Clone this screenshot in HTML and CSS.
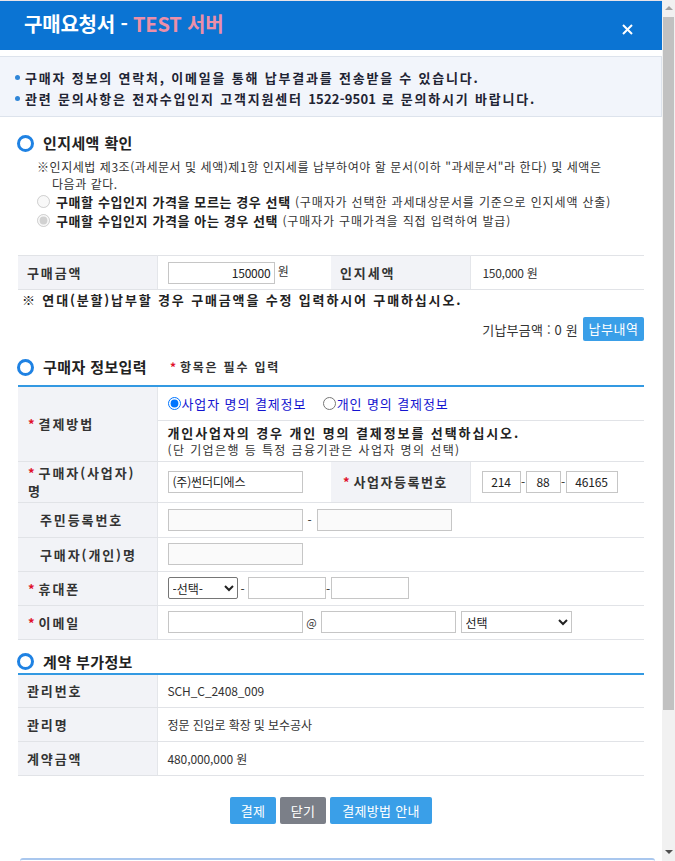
FILE: index.html
```html
<!DOCTYPE html>
<html lang="ko">
<head>
<meta charset="utf-8">
<title>구매요청서</title>
<link rel="stylesheet" href="styles.css">
</head>
<body>
<div class="window">
  <div class="main">
    <header class="titlebar">
      <h1 class="title">구매요청서 - <span class="test">TEST 서버</span></h1>
      <svg class="close" width="11" height="11" viewBox="0 0 11 11"><path d="M1 1L10 10M10 1L1 10" stroke="#fff" stroke-width="2"/></svg>
    </header>

    <div class="notice">
      <ul>
        <li>구매자 정보의 연락처, 이메일을 통해 납부결과를 전송받을 수 있습니다.</li>
        <li>관련 문의사항은 전자수입인지 고객지원센터 <span class="num">1522-9501</span> 로 문의하시기 바랍니다.</li>
      </ul>
    </div>

    <div class="content">
      <h2 class="sec-title first">인지세액 확인</h2>
      <p class="law">※인지세법 제3조(과세문서 및 세액)제1항 인지세를 납부하여야 할 문서(이하 "과세문서"라 한다) 및 세액은<br><span class="indent">다음과 같다.</span></p>
      <label class="opt"><input type="radio" name="t" disabled><b>구매할 수입인지 가격을 모르는 경우 선택</b> (구매자가 선택한 과세대상문서를 기준으로 인지세액 산출)</label>
      <label class="opt"><input type="radio" name="t" disabled checked><b>구매할 수입인지 가격을 아는 경우 선택</b> (구매자가 구매가격을 직접 입력하여 발급)</label>

      <table class="grid amount">
        <colgroup><col class="c139"><col class="c174"><col class="c139"><col class="c174"></colgroup>
        <tr>
          <th>구매금액</th>
          <td><input class="inp w107 right" type="text" value="150000"> 원</td>
          <th>인지세액</th>
          <td class="val">150,000 원</td>
        </tr>
      </table>
      <p class="warn">※ 연대(분할)납부할 경우 구매금액을 수정 입력하시어 구매하십시오.</p>
      <div class="paid"><span>기납부금액 : 0 원</span><button class="btn small">납부내역</button></div>

      <h2 class="sec-title">구매자 정보입력 <span class="req"><i>*</i>항목은 필수 입력</span></h2>
      <table class="grid form">
        <colgroup><col class="c139"><col class="c174"><col class="c139"><col class="c174"></colgroup>
        <tr class="r34">
          <th rowspan="2"><i>*</i>결제방법</th>
          <td colspan="3" class="radios">
            <label class="blue"><input type="radio" name="p" checked>사업자 명의 결제정보</label>
            <label class="blue"><input type="radio" name="p">개인 명의 결제정보</label>
          </td>
        </tr>
        <tr class="r41">
          <td colspan="3" class="guide"><b>개인사업자의 경우 개인 명의 결제정보를 선택하십시오.</b><br>(단 기업은행 등 특정 금융기관은 사업자 명의 선택)</td>
        </tr>
        <tr class="r41">
          <th class="wrap"><i>*</i>구매자(사업자)<br>명</th>
          <td><input class="inp w135" type="text" value="(주)썬더디에스"></td>
          <th class="mid"><i>*</i>사업자등록번호</th>
          <td class="biz"><input class="inp w39 c" type="text" value="214"><span class="dash">-</span><input class="inp w35 c" type="text" value="88"><span class="dash">-</span><input class="inp w52 c" type="text" value="46165"></td>
        </tr>
        <tr class="r35">
          <th class="noreq">주민등록번호</th>
          <td colspan="3"><input class="inp w135 off" type="text"><span class="dash wide">-</span><input class="inp w135 off" type="text"></td>
        </tr>
        <tr class="r34">
          <th class="noreq">구매자(개인)명</th>
          <td colspan="3"><input class="inp w135 off" type="text"></td>
        </tr>
        <tr class="r34">
          <th><i>*</i>휴대폰</th>
          <td colspan="3" class="phone"><select class="sel s70"><option>-선택-</option></select><span class="dash d10">-</span><input class="inp w78" type="text"><span class="dash">-</span><input class="inp w78" type="text"></td>
        </tr>
        <tr class="r34">
          <th><i>*</i>이메일</th>
          <td colspan="3"><input class="inp w135" type="text"><span class="at">@</span><input class="inp w135" type="text"><select class="sel s111"><option>선택</option></select></td>
        </tr>
      </table>

      <h2 class="sec-title third">계약 부가정보</h2>
      <table class="grid info">
        <colgroup><col class="c139"><col class="c487"></colgroup>
        <tr class="r34"><th>관리번호</th><td>SCH_C_2408_009</td></tr>
        <tr class="r34"><th>관리명</th><td>정문 진입로 확장 및 보수공사</td></tr>
        <tr class="r34"><th>계약금액</th><td>480,000,000 원</td></tr>
      </table>

      <div class="actions">
        <button class="btn b46">결제</button>
        <button class="btn gray b46">닫기</button>
        <button class="btn b102">결제방법 안내</button>
      </div>
    </div>
    <div class="next-panel"></div>
  </div>
  <div class="scrollbar">
    <span class="arr up"></span>
    <span class="thumb"></span>
    <span class="track"></span>
    <span class="arr down"></span>
  </div>
</div>
</body>
</html>
```

FILE: styles.css
```css
* { box-sizing: border-box; }
html, body { margin: 0; padding: 0; background: #fff; }
body {
  font-family: "Noto Sans CJK KR", "Noto Sans", "Liberation Sans", sans-serif;
  color: #333;
  font-size: 12px;
}
.window {
  display: flex;
  width: 675px;
  height: 861px;
  overflow: hidden;
}
.main {
  width: 662px;
  flex: none;
  display: flex;
  flex-direction: column;
}

/* title bar */
.titlebar {
  height: 50px;
  flex: none;
  background: #0b74d3;
  border-top: 1px solid #e9e3e8;
  display: flex;
  align-items: center;
  justify-content: space-between;
  padding: 0 29px 0 24px;
}
.title {
  margin: 0;
  font-size: 20px;
  font-weight: bold;
  color: #fff;
  line-height: 24px;
  margin-top: -4px;
  letter-spacing: -0.2px;
}
.title .test { color: #ec8fa8; }
.close { margin-top: 8px; }

/* notice */
.notice {
  margin-top: 6px;
  background: #f2f5fb;
  border-top: 1px solid #dde3ec;
  border-bottom: 1px solid #dde3ec;
  border-right: 1px solid #dde3ec;
  padding: 10px 0 7px 15px;
}
.notice ul { margin: 0; padding: 0; list-style: none; }
.notice li {
  line-height: 21px;
  font-size: 13px;
  font-weight: bold;
  color: #1f2433;
  letter-spacing: 1.8px;
  display: flex;
  align-items: center;
  white-space: pre;
}
.notice li .num { letter-spacing: 0.2px; }
.notice li::before {
  content: "";
  width: 5px;
  height: 5px;
  border-radius: 50%;
  background: #2f86d8;
  margin-right: 5px;
  flex: none;
}

.content { padding: 0 18px; }

/* section title */
.sec-title {
  margin: 16px 0 0 -1px;
  font-size: 15px;
  line-height: 20px;
  font-weight: bold;
  color: #222;
  display: flex;
  align-items: center;
  letter-spacing: 0.4px;
}
.sec-title::before {
  content: "";
  width: 11px;
  height: 11px;
  border-radius: 50%;
  border: 3px solid #1f82e3;
  margin-right: 9px;
  flex: none;
}
.sec-title .req {
  font-size: 12px;
  font-weight: bold;
  margin-left: 23px;
  color: #333;
  letter-spacing: 1.8px;
}
.req i {
  font-style: normal;
  color: #e0102a;
  margin-right: 2px;
}
th i {
  font-style: normal;
  color: #e0102a;
  margin-right: 4px;
  letter-spacing: 0;
}

.law {
  margin: 5px 0 0 19px;
  font-size: 12px;
  line-height: 17px;
  color: #333;
  letter-spacing: 0.55px;
}
.law .indent { padding-left: 15px; }

.opt {
  display: flex;
  align-items: center;
  margin-left: 19px;
  font-size: 12px;
  line-height: 19px;
  color: #333;
  letter-spacing: 0.85px;
  white-space: pre;
}
.opt input {
  margin: 0 6px 0 0;
  width: 13px;
  height: 13px;
}
.opt b { font-size: 13px; letter-spacing: 0.6px; color: #222; }

/* grid tables */
.grid {
  width: 626px;
  border-collapse: collapse;
  table-layout: fixed;
}
col.c139 { width: 139px; }
col.c174 { width: 174px; }
col.c487 { width: 487px; }
.grid th, .grid td {
  border-bottom: 1px solid #e1e3e7;
  padding: 0;
  vertical-align: middle;
  text-align: left;
}
.grid th {
  background: #f2f3f7;
  font-size: 13px;
  font-weight: bold;
  color: #333;
  letter-spacing: 1.9px;
  border-right: 1px solid #e4e6ea;
}
.grid td { background: #fff; padding-left: 10px; }
.grid tr.r34 > * { height: 34px; }
.grid tr.r35 > * { height: 35px; }
.grid tr.r41 > * { height: 41px; }

.amount { margin-top: 25px; border-top: 1px solid #e1e3e7; }
.amount th { padding-left: 9px; height: 34px; }
.amount td { font-size: 12px; }
.amount td.val { padding-left: 12px; letter-spacing: -0.3px; }

.warn {
  margin: 0;
  font-size: 13px;
  font-weight: bold;
  line-height: 20px;
  color: #222;
  padding-left: 4px;
  letter-spacing: 1.85px;
}
.paid {
  display: flex;
  justify-content: flex-end;
  align-items: center;
  gap: 5px;
  margin-top: 7px;
  font-size: 13px;
  color: #333;
  letter-spacing: 0.2px;
}

.btn {
  border: none;
  background: #3a9fe8;
  color: #fff;
  font-family: "Noto Sans CJK KR", "Noto Sans", sans-serif;
  font-size: 13px;
  height: 27px;
  padding: 0;
  border-radius: 2px;
  line-height: 27px;
  letter-spacing: 0.3px;
  text-align: center;
}
.btn.small { height: 24px; line-height: 24px; width: 61px; letter-spacing: 0.5px; }
.btn.gray { background: #7b7f88; }
.b46 { width: 46px; }
.b102 { width: 102px; }

.form { margin-top: 8px; border-top: 2px solid #3399e2; }
.form th { padding-left: 10px; }
.form th.noreq { padding-left: 22px; }
.form th.mid { padding-left: 12px; letter-spacing: 1.5px; }
.form th.wrap { line-height: 18px; }
.radios label {
  display: inline-flex;
  align-items: center;
  margin-right: 13px;
}
.blue { color: #1414d0; font-size: 13px; letter-spacing: 0.9px; }
.radios input { margin: 0 1px 0 0; width: 13px; height: 13px; }
.guide { font-size: 12px; line-height: 17px; color: #333; letter-spacing: 1.4px; }
.guide b { font-size: 13px; letter-spacing: 1.9px; color: #222; }

.inp {
  height: 22px;
  border: 1px solid #c6c6c6;
  background: #fff;
  font-family: "Noto Sans CJK KR", "Noto Sans", sans-serif;
  font-size: 12px;
  color: #222;
  padding: 0 4px;
  vertical-align: middle;
  margin: 0;
  letter-spacing: -0.2px;
}
.inp.off { background: #fafafa; }
.inp.right { text-align: right; padding-right: 3px; }
.inp.c { text-align: center; }
.w107 { width: 107px; }
.w135 { width: 135px; }
.w39 { width: 39px; }
.w35 { width: 35px; }
.w52 { width: 52px; }
.w78 { width: 78px; }
.dash { display: inline-block; width: 5px; text-align: center; vertical-align: middle; font-size: 12px; }
.dash.wide { width: 14px; }
.dash.d10 { width: 10px; }
.biz { padding-left: 11px !important; }
.at { display: inline-block; width: 18px; text-align: center; font-size: 11px; vertical-align: middle; }
.sel {
  height: 22px;
  font-family: "Noto Sans CJK KR", "Noto Sans", sans-serif;
  font-size: 12px;
  vertical-align: middle;
  margin: 0;
  color: #222;
  background: #fff;
}
.s70 { width: 70px; border: 1px solid #767676; border-radius: 2px; }
.s111 { width: 111px; margin-left: 5px; border: 1px solid #c6c6c6; border-radius: 0; }

.sec-title.third { margin-top: 12px; }
.info { margin-top: 1px; border-top: 2px solid #3399e2; }
.info th { padding-left: 9px; }
.info td { font-size: 12px; letter-spacing: -0.1px; }

.actions {
  display: flex;
  justify-content: center;
  gap: 4px;
  margin-top: 21px;
}

.next-panel {
  margin: 34px 7px 0 20px;
  height: 10px;
  border-top: 2px solid #a9c7ee;
  border-radius: 8px 8px 0 0;
}

/* fake scrollbar */
.scrollbar {
  width: 13px;
  flex: none;
  background: #f1f1f1;
  display: flex;
  flex-direction: column;
  align-items: center;
}
.arr { width: 0; height: 0; border-left: 4px solid transparent; border-right: 4px solid transparent; flex: none; }
.arr.up { border-bottom: 4px solid #a3a3a3; margin: 6px 0 7px; }
.arr.down { border-top: 4px solid #505050; margin: 0 0 7px; }
.thumb { width: 11px; height: 693px; background: #c1c1c1; flex: none; }
.track { flex: 1; }
```
